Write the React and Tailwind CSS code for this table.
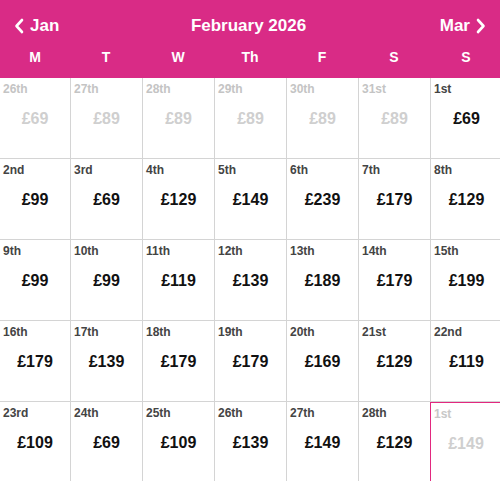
import React from "react";

const rows = [
  [["26th", "£69", 1], ["27th", "£89", 1], ["28th", "£89", 1], ["29th", "£89", 1], ["30th", "£89", 1], ["31st", "£89", 1], ["1st", "£69", 0]],
  [["2nd", "£99", 0], ["3rd", "£69", 0], ["4th", "£129", 0], ["5th", "£149", 0], ["6th", "£239", 0], ["7th", "£179", 0], ["8th", "£129", 0]],
  [["9th", "£99", 0], ["10th", "£99", 0], ["11th", "£119", 0], ["12th", "£139", 0], ["13th", "£189", 0], ["14th", "£179", 0], ["15th", "£199", 0]],
  [["16th", "£179", 0], ["17th", "£139", 0], ["18th", "£179", 0], ["19th", "£179", 0], ["20th", "£169", 0], ["21st", "£129", 0], ["22nd", "£119", 0]],
  [["23rd", "£109", 0], ["24th", "£69", 0], ["25th", "£109", 0], ["26th", "£139", 0], ["27th", "£149", 0], ["28th", "£129", 0], ["1st", "£149", 2]],
];

const days = ["M", "T", "W", "Th", "F", "S", "S"];

function Chevron({ dir }) {
  return (
    <svg width="10" height="16" viewBox="0 0 10 16" className="shrink-0">
      <path
        d={dir === "left" ? "M8 2 L2.5 8 L8 14" : "M2 2 L7.5 8 L2 14"}
        fill="none"
        stroke="white"
        strokeWidth="2.6"
        strokeLinecap="round"
        strokeLinejoin="round"
      />
    </svg>
  );
}

export default function App() {
  return (
    <div
      className="w-[500px] h-[481px] overflow-hidden bg-white"
      style={{ fontFamily: '"Liberation Sans", Arial, sans-serif' }}
    >
      <div className="bg-[#d92b86] h-[78px] text-white">
        <div className="flex items-center justify-between h-[50px] pt-[1px] px-[14px]">
          <div className="flex items-center gap-[6px] text-[17px] font-bold">
            <Chevron dir="left" />
            <span>Jan</span>
          </div>
          <div className="text-[17px] font-bold mr-[2px]">February 2026</div>
          <div className="flex items-center gap-[6px] text-[17px] font-bold">
            <span>Mar</span>
            <Chevron dir="right" />
          </div>
        </div>
        <div className="grid grid-cols-[70px_repeat(6,72px)] text-[14px] font-bold h-[28px] leading-[14px]">
          {days.map((d, i) => (
            <div key={i} className="text-center">
              {d}
            </div>
          ))}
        </div>
      </div>
      <div className="grid grid-cols-[70px_repeat(6,72px)] w-[502px]">
        {rows.map((row, r) =>
          row.map(([label, price, state], c) => (
            <div
              key={r + "-" + c}
              className={
                "h-[81px] pl-[3px] pt-[4px] " +
                (state === 2
                  ? "border-l border-t border-r border-[#e2287f] "
                  : (c > 0 ? "border-l border-[#d4d4d4] " : "") +
                    (r < 4 ? "border-b border-[#d4d4d4] " : ""))
              }
            >
              <div
                className={
                  "text-[12px] font-bold leading-[14px] " +
                  (state === 1 ? "text-[#c4c4c4]" : state === 2 ? "text-[#c8c8c8]" : "text-[#444]")
                }
              >
                {label}
              </div>
              <div
                className={
                  "text-[16px] font-bold leading-[20px] text-center mt-[13px] pr-[3px] " +
                  (state === 0 ? "text-[#111]" : "text-[#cfcfcf]")
                }
              >
                {price}
              </div>
            </div>
          ))
        )}
      </div>
    </div>
  );
}
